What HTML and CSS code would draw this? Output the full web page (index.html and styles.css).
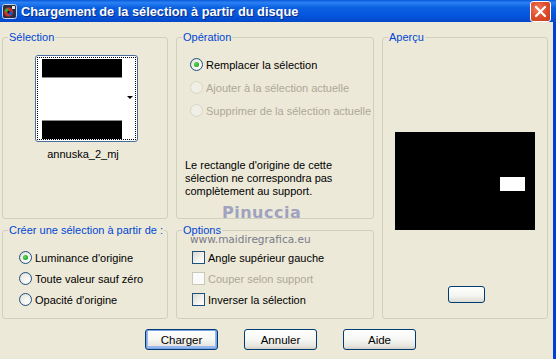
FILE: index.html
```html
<!DOCTYPE html>
<html lang="fr">
<head>
<meta charset="utf-8">
<link rel="stylesheet" href="styles.css">
</head>
<body>
<div class="window">
  <div class="titlebar">
    <svg class="appicon" width="15" height="15" viewBox="0 0 15 15">
      <rect x="0.5" y="0.5" width="14" height="14" rx="2" fill="#2a3040" stroke="#c8d4ea"/>
      <circle cx="6.5" cy="8" r="4.5" fill="#d0302a"/>
      <circle cx="5" cy="6.5" r="2" fill="#30b040"/>
      <circle cx="8.5" cy="9.5" r="2" fill="#2050d0"/>
      <circle cx="6.5" cy="8" r="1.2" fill="#111"/>
      <rect x="10" y="2" width="3" height="3" fill="#e8e8e8"/>
    </svg>
    <span class="title">Chargement de la sélection à partir du disque</span>
    <div class="close">
      <svg width="19" height="19" viewBox="0 0 19 19">
        <path d="M5 5 L14 14 M14 5 L5 14" stroke="#fff" stroke-width="2.2" stroke-linecap="round"/>
      </svg>
    </div>
  </div>
  <div class="client">
    <div class="groups">
      <fieldset class="grp g-sel">
        <legend>Sélection</legend>
        <div class="thumb">
          <div class="thumb-in">
            <div class="bar top"></div>
            <div class="mid"></div>
            <div class="bar bottom"></div>
            <span class="arrow"></span>
          </div>
        </div>
        <div class="thumbname">annuska_2_mj</div>
      </fieldset>
      <fieldset class="grp g-op">
        <legend>Opération</legend>
        <div class="opts op-list">
          <div class="opt"><span class="radio on"></span>Remplacer la sélection</div>
          <div class="opt dis"><span class="radio off"></span>Ajouter à la sélection actuelle</div>
          <div class="opt dis"><span class="radio off"></span>Supprimer de la sélection actuelle</div>
        </div>
        <p class="note">Le rectangle d'origine de cette sélection ne correspondra pas complètement au support.</p>
      </fieldset>
      <fieldset class="grp g-prev">
        <legend>Aperçu</legend>
        <div class="preview"><span class="hole"></span></div>
        <div class="smallbtn"></div>
      </fieldset>
      <fieldset class="grp g-src">
        <legend>Créer une sélection à partir de :</legend>
        <div class="opts src-list">
          <div class="opt"><span class="radio on"></span>Luminance d'origine</div>
          <div class="opt"><span class="radio"></span>Toute valeur sauf zéro</div>
          <div class="opt"><span class="radio"></span>Opacité d'origine</div>
        </div>
      </fieldset>
      <fieldset class="grp g-optn">
        <legend>Options</legend>
        <div class="opts chk-list">
          <div class="opt"><span class="check"></span>Angle supérieur gauche</div>
          <div class="opt dis"><span class="check dis"></span>Couper selon support</div>
          <div class="opt"><span class="check"></span>Inverser la sélection</div>
        </div>
      </fieldset>
    </div>
    <div class="buttons">
      <button class="btn default">Charger</button>
      <button class="btn">Annuler</button>
      <button class="btn">Aide</button>
    </div>
    <div class="watermark">
      <span class="wm1">Pinuccia</span>
      <span class="wm2">www.maidiregrafica.eu</span>
    </div>
  </div>
</div>
</body>
</html>
```
FILE: styles.css
```css
html, body {
  margin: 0;
  padding: 0;
  background: #ece9d8;
}
body {
  width: 556px;
  height: 359px;
  overflow: hidden;
  font-family: "Liberation Sans", Arial, sans-serif;
  font-size: 11px;
  color: #000;
}
.window {
  width: 556px;
  height: 359px;
  display: flex;
  flex-direction: column;
}
.titlebar {
  height: 22px;
  flex: none;
  display: flex;
  align-items: center;
  background: linear-gradient(to bottom, #0a5ad8 0%, #2a80f4 12%, #0a60e0 35%, #0456de 70%, #0448c8 100%);
  color: #fff;
  padding-left: 2px;
}
.appicon {
  flex: none;
  margin-right: 4px;
}
.title {
  font-weight: bold;
  font-size: 12.8px;
  text-shadow: 1px 1px 0 #0a2a80;
  flex: 1;
  white-space: nowrap;
}
.close {
  width: 21px;
  height: 21px;
  margin-right: 5px;
  border: 1px solid #fff;
  border-radius: 3px;
  box-sizing: border-box;
  background: radial-gradient(circle at 35% 35%, #f08060 0%, #e05030 45%, #c83a18 100%);
  display: flex;
  align-items: center;
  justify-content: center;
}
.client {
  flex: 1;
  position: relative;
  border-right: 3px solid #0040d8;
  padding: 8px 0 0 2px;
}
.groups {
  display: grid;
  grid-template-columns: 166px 199px 167px;
  grid-template-rows: 189px 96px;
  column-gap: 7px;
  row-gap: 4px;
}
.grp {
  margin: 0;
  padding: 0;
  border: 1px solid #d0d0bf;
  border-radius: 3px;
  min-width: 0;
  position: relative;
}
.grp legend {
  color: #0046d5;
  padding: 0 1px;
  margin-left: 5px;
  line-height: 14px;
  font-size: 11px;
  white-space: nowrap;
}
.g-sel { grid-column: 1; grid-row: 1; }
.g-op { grid-column: 2; grid-row: 1; margin-left: 1px; }
.g-prev { grid-column: 3; grid-row: 1 / span 2; margin-left: 1px; }
.g-src { grid-column: 1; grid-row: 2; }
.g-optn { grid-column: 2; grid-row: 2; margin-left: 1px; }

/* thumbnail */
.thumb {
  width: 103px;
  height: 87px;
  box-sizing: border-box;
  margin: 11px 0 0 32px;
  border: 1px solid #4a6c9a;
  border-radius: 3px;
  background: #fff;
  padding: 1px;
}
.thumb-in {
  position: relative;
  height: 100%;
  box-sizing: border-box;
  border: 1px dotted #000;
  padding: 1px 13px 0 4px;
  display: flex;
  flex-direction: column;
}
.bar {
  background: #000;
  height: 18px;
  flex: none;
}
.bar.top { border-bottom: 1px solid #888; }
.bar.bottom { border-top: 1px solid #888; margin-top: auto; }
.mid { flex: 1; background: #fff; }
.arrow {
  position: absolute;
  right: 2px;
  top: 38px;
  width: 0;
  height: 0;
  border-left: 3px solid transparent;
  border-right: 3px solid transparent;
  border-top: 3px solid #000;
}
.thumbname {
  text-align: center;
  margin-top: 6px;
  padding-right: 4px;
}

/* radios / checks */
.opts {
  display: flex;
  flex-direction: column;
}
.opt {
  display: flex;
  align-items: center;
  height: 13px;
  white-space: nowrap;
}
.opt.dis { color: #aca899; }
.radio {
  width: 13px;
  height: 13px;
  box-sizing: border-box;
  border-radius: 50%;
  border: 1px solid #1c5180;
  background: radial-gradient(circle at 65% 65%, #ffffff 0%, #ecebe4 60%, #d6d4ca 100%);
  margin-right: 3px;
  flex: none;
  display: flex;
  align-items: center;
  justify-content: center;
}
.radio.on::after {
  content: "";
  width: 5px;
  height: 5px;
  border-radius: 50%;
  background: radial-gradient(circle at 40% 40%, #5ce15c 0%, #21a121 70%, #1a8a1a 100%);
}
.radio.off {
  border-color: #cac8bb;
  background: #f4f3ee;
  opacity: 0.6;
}
.check {
  width: 13px;
  height: 13px;
  box-sizing: border-box;
  border: 1px solid #1c5180;
  background: linear-gradient(135deg, #dcdad0 0%, #f4f3ee 60%, #ffffff 100%);
  margin-right: 3px;
  flex: none;
}
.check.dis {
  border-color: #cac8bb;
  background: #fafaf8;
}
.op-list {
  margin: 14px 0 0 13px;
  row-gap: 10px;
}
.note {
  margin: 42px 0 0 8px;
  line-height: 13px;
  width: 180px;
}
.src-list {
  margin: 14px 0 0 16px;
  row-gap: 8px;
}
.chk-list {
  margin: 14px 0 0 15px;
  row-gap: 8px;
}

/* preview */
.preview {
  position: relative;
  width: 140px;
  height: 98px;
  background: #000;
  margin: 88px 0 0 12px;
}
.hole {
  position: absolute;
  left: 105px;
  top: 45px;
  width: 25px;
  height: 14px;
  background: #fff;
}
.smallbtn {
  width: 37px;
  height: 17px;
  box-sizing: border-box;
  margin: 56px 0 0 65px;
  border: 1px solid #003c74;
  border-radius: 3px;
  background: linear-gradient(to bottom, #ffffff 0%, #f4f4f0 60%, #dcdbd2 100%);
}

/* buttons */
.buttons {
  display: flex;
  gap: 26px;
  margin: 10px 0 0 143px;
}
.btn {
  width: 73px;
  height: 21px;
  box-sizing: border-box;
  border: 1px solid #003c74;
  border-radius: 3px;
  background: linear-gradient(to bottom, #ffffff 0%, #f6f6f3 50%, #e6e5de 85%, #d6d0c5 100%);
  font-family: "Liberation Sans", Arial, sans-serif;
  font-size: 11.5px;
  color: #000;
  padding: 0;
}
.btn.default {
  box-shadow: inset 0 0 0 1px #7ca4e8, inset 0 -1px 0 2px #98b8ec;
}

/* watermark overlay */
.watermark {
  position: absolute;
  left: 176px;
  top: 181px;
  display: flex;
  flex-direction: column;
  align-items: flex-start;
  width: 160px;
  pointer-events: none;
}
.wm1 {
  font-family: "DejaVu Sans", sans-serif;
  font-size: 16px;
  font-weight: bold;
  color: #a0a2c0;
  letter-spacing: 0.5px;
  line-height: 20px;
  margin-left: 46px;
}
.wm2 {
  font-family: "DejaVu Sans", sans-serif;
  font-size: 10.5px;
  color: #7a7a8a;
  line-height: 13px;
  margin-top: 10px;
  margin-left: 14px;
}
```
